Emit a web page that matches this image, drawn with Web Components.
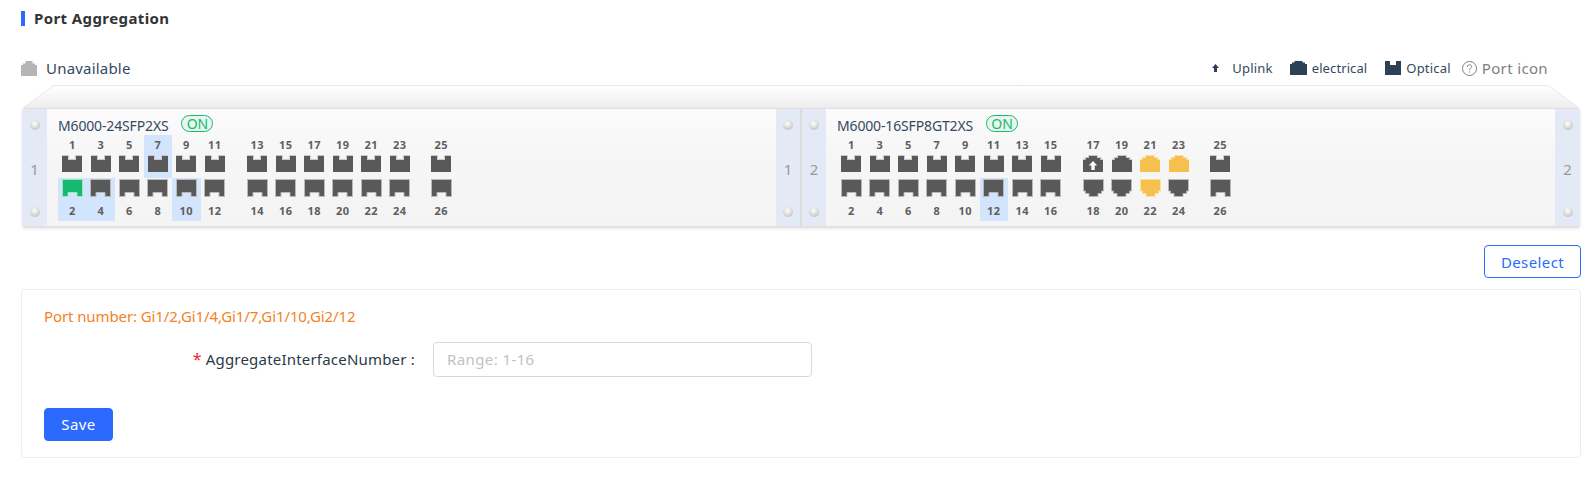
<!DOCTYPE html>
<html lang="en">
<head>
<meta charset="utf-8">
<title>Port Aggregation</title>
<style>
  html, body { margin: 0; background: #fff; }
  body { font-family: "Noto Sans", "Open Sans", sans-serif; color: #34495e; }
</style>
</head>
<body>
<port-aggregation-page></port-aggregation-page>
<script>
const DARK = '#595959';

// top ports are 20x17 with a light line on the upper edge only,
// bottom ports are 21x18 with a full outline
const shapes = {
  sfpTop: { fill: 'M0 1H6V5H14V1H20V17H0Z', edge: 'M0 .5H6.5V4.5H13.5V.5H20' },
  rjTop: { fill: 'M0 17V5H2.5V3H6V1H14V3H17.5V5H20V17Z', edge: 'M0 4.5H2V2.5H5.5V.5H14.5V2.5H18V4.5H20' },
  sfpBottom: { fill: 'M.5 .5H20.5V17.5H15V13.5H6V17.5H.5Z' },
  rjBottom: { fill: 'M.5 .5H20.5V12H18.5V14.5H15V17.5H6V14.5H2.5V12H.5Z' }
};

function portIcon(type, color, edge, uplink) {
  const shape = shapes[type];
  const arrow = uplink ? '<path d="M10 6L14.2 10.5H11.7V15H8.3V10.5H5.8Z" fill="#fff"/>' : '';
  if (shape.edge) {
    return `<svg width="20" height="17" viewBox="0 0 20 17"><path d="${shape.fill}" fill="${color}"/><path d="${shape.edge}" fill="none" stroke="${edge}"/>${arrow}</svg>`;
  }
  return `<svg width="21" height="18" viewBox="0 0 21 18"><path d="${shape.fill}" fill="${color}" stroke="${edge}"/></svg>`;
}

class SectionHeading extends HTMLElement {
  constructor() {
    super();
    this.attachShadow({ mode: 'open' }).innerHTML = `
      <style>
        :host { display: flex; align-items: center; gap: 9px; height: 15px; font-size: 15px; font-weight: 700; color: #333; letter-spacing: .4px; }
        i { width: 4px; height: 15px; background: #2b6afd; }
        span { margin-top: -2px; }
      </style>
      <i></i><span><slot></slot></span>`;
  }
}
customElements.define('section-heading', SectionHeading);

class PortLegend extends HTMLElement {
  constructor() {
    super();
    this.attachShadow({ mode: 'open' }).innerHTML = `
      <style>
        :host { display: flex; align-items: center; height: 20px; color: #34495e; font-size: 13px; letter-spacing: .2px; }
        .status { display: flex; align-items: center; gap: 9px; font-size: 15px; margin-right: auto; }
        .item { display: flex; align-items: center; }
        svg { display: block; }
        .uplink { margin-right: 13px; }
        .uplink-text { margin-right: 17px; }
        .elec-text { margin-left: 5px; margin-right: 18px; letter-spacing: .1px; }
        .opt-text { margin-left: 5px; margin-right: 11px; }
        .help { display: flex; align-items: center; gap: 5px; color: #808080; font-size: 15px; letter-spacing: .35px; margin-right: 33px; }
      </style>
      <div class="status">
        <svg width="16" height="15" viewBox="0 0 16 15"><path d="M0 15V4H2V2.5H4.5V0H11.5V2.5H14V4H16V15Z" fill="#b5b5b5"/></svg>
        <span>Unavailable</span>
      </div>
      <div class="item">
        <svg class="uplink" width="7" height="8" viewBox="0 0 7 8"><path d="M3.5 0L7 4H5V8H2V4H0Z" fill="#2c4058"/></svg>
        <span class="uplink-text">Uplink</span>
      </div>
      <div class="item">
        <svg width="17" height="14" viewBox="0 0 17 14"><path d="M0 14V3H2V1.5H4.5V0H12.5V1.5H15V3H17V14Z" fill="#2c4058"/></svg>
        <span class="elec-text">electrical</span>
      </div>
      <div class="item">
        <svg width="16" height="14" viewBox="0 0 16 14"><path d="M0 0H5V4H11V0H16V14H0Z" fill="#2c4058"/></svg>
        <span class="opt-text">Optical</span>
      </div>
      <div class="help">
        <svg width="15" height="15" viewBox="0 0 15 15" fill="none" stroke="#808080"><circle cx="7.5" cy="7.5" r="7"/><path d="M5.4 5.8C5.4 3 9.7 3 9.7 5.7C9.7 7.3 7.5 7.3 7.5 9.1"/><path d="M7.5 10.4V11.6"/></svg>
        <span>Port icon</span>
      </div>`;
  }
}
customElements.define('port-legend', PortLegend);

class SwitchPort extends HTMLElement {
  constructor() {
    super();
    this.attachShadow({ mode: 'open' });
  }
  connectedCallback() {
    const n = Number(this.getAttribute('n'));
    const top = n % 2 === 1;
    const rj = this.hasAttribute('rj');
    const state = this.getAttribute('state');
    const type = (rj ? 'rj' : 'sfp') + (top ? 'Top' : 'Bottom');
    let color = DARK;
    let edge = top ? '#c9c9c9' : '#b9b9b9';
    if (state === 'up') { color = '#14bb6e'; edge = '#a3e2c4'; }
    if (state === 'warn') { color = '#f5c04e'; edge = '#f9dfa6'; }
    this.shadowRoot.innerHTML = `
      <style>
        :host { display: flex; flex-direction: column; align-items: center; height: 43px; box-sizing: border-box;
                font-size: 11px; font-weight: 700; color: #5f5f5f; letter-spacing: .4px; }
        :host([selected]) { background: #d3e4fd; }
        svg { display: block; }
        span { display: block; text-align: center; }
        .top span { height: 20px; line-height: 20px; }
        .bottom { padding-top: 1px; }
        .bottom span { padding-top: 3px; height: 21px; line-height: 21px; }
      </style>
      <div class="${top ? 'top' : 'bottom'}">
        ${top ? `<span>${n}</span>` : ''}
        ${portIcon(type, color, edge, this.hasAttribute('uplink'))}
        ${top ? '' : `<span>${n}</span>`}
      </div>`;
  }
}
customElements.define('switch-port', SwitchPort);

class SideStrip extends HTMLElement {
  constructor() {
    super();
    this.attachShadow({ mode: 'open' }).innerHTML = `
      <style>
        :host { display: flex; flex-direction: column; align-items: center; justify-content: space-between; box-sizing: border-box;
                width: var(--strip-width, 24px); flex: none; padding: 11px 0 9px; background: #e4e9f6; color: #999; font-size: 15px; }
        b { display: block; width: 10px; height: 10px; border-radius: 50%; background: radial-gradient(circle at 45% 35%, #f8f8f8 10%, #d6d6d6 55%, #adadad 100%); }
      </style>
      <b></b><slot></slot><b></b>`;
  }
}
customElements.define('side-strip', SideStrip);

class SwitchUnit extends HTMLElement {
  constructor() {
    super();
    this.attachShadow({ mode: 'open' });
  }
  connectedCallback() {
    const slotNo = this.getAttribute('slot-no');
    const list = name => (this.getAttribute(name) || '').split(',');
    const selected = list('selected');
    const up = list('up');
    const warn = list('warn');
    const rj = list('rj');
    const uplink = this.getAttribute('uplink');
    const port = n => {
      const s = String(n);
      const attrs = [`n="${n}"`];
      if (selected.includes(s)) attrs.push('selected');
      if (up.includes(s)) attrs.push('state="up"');
      if (warn.includes(s)) attrs.push('state="warn"');
      if (rj.includes(s)) attrs.push('rj');
      if (uplink === s) attrs.push('uplink');
      return `<switch-port ${attrs.join(' ')}></switch-port>`;
    };
    const group = (from, to) => {
      let html = '';
      for (let n = from; n <= to; n++) html += port(n);
      return `<div class="group">${html}</div>`;
    };
    const split = Number(this.getAttribute('split'));
    const outerLeft = this.hasAttribute('first');
    this.shadowRoot.innerHTML = `
      <style>
        :host { display: flex; flex: 1 1 0; min-width: 0; }
        :host([first]) { border-right: 1px solid #dcdcdc; }
        :host(:not([first])) { border-left: 1px solid #dcdcdc; }
        .wide { --strip-width: 25px; }
        .main { flex: 1; min-width: 0; padding-left: 11px; display: flex; flex-direction: column;
                background: linear-gradient(#fdfbfc, #f6f6f6 40%, #f4f4f4); }
        .title { display: flex; align-items: center; box-sizing: border-box; height: 26px; padding-top: 6px; font-size: 14px; color: #34495e; letter-spacing: -.15px; }
        .on { margin: 0 0 3px 13px; width: 32px; height: 17px; box-sizing: border-box; border: 1px solid #18b96e; border-radius: 9px;
              background: #e7f7ef; color: #18b96e; font-size: 14px; line-height: 15px; text-align: center; letter-spacing: 0; }
        .ports { display: flex; }
        .group { display: grid; grid-auto-flow: column; grid-template-rows: 43px 43px; grid-auto-columns: 28.5px; }
        .group + .group { margin-left: 14px; }
        .group:last-child { margin-left: 13px; }
      </style>
      <side-strip class="${outerLeft ? 'wide' : ''}">${slotNo}</side-strip>
      <div class="main">
        <div class="title"><span>${this.getAttribute('model')}</span><span class="on">ON</span></div>
        <div class="ports">${group(1, split)}${group(split + 1, 24)}${group(25, 26)}</div>
      </div>
      <side-strip class="${outerLeft ? '' : 'wide'}">${slotNo}</side-strip>`;
  }
}
customElements.define('switch-unit', SwitchUnit);

class SwitchChassis extends HTMLElement {
  constructor() {
    super();
    this.attachShadow({ mode: 'open' }).innerHTML = `
      <style>
        :host { display: block; margin: 0 1px; }
        svg { display: block; width: 100%; height: 23px; }
        .face { display: flex; height: 120px; box-sizing: border-box; border-top: 1px solid #dfdfdf; border-bottom: 2px solid #e2e2e2;
                border-radius: 3px; box-shadow: 0 1px 3px rgba(0,0,0,.1); overflow: hidden; }
      </style>
      <svg viewBox="0 0 1558 23" aria-hidden="true">
        <defs><linearGradient id="bevel" x1="0" y1="0" x2="0" y2="1"><stop offset="0" stop-color="#fff"/><stop offset="1" stop-color="#eeeded"/></linearGradient></defs>
        <path d="M1 23L31.5 .5H1526.5L1557 23Z" fill="url(#bevel)" stroke="#e8e8e8"/>
      </svg>
      <div class="face"><slot></slot></div>`;
  }
}
customElements.define('switch-chassis', SwitchChassis);

class AppButton extends HTMLElement {
  constructor() {
    super();
    this.attachShadow({ mode: 'open' }).innerHTML = `
      <style>
        :host { display: inline-flex; align-items: center; justify-content: center; box-sizing: border-box; height: 33px;
                border: 1px solid #2b6afd; border-radius: 4px; font-size: 15px; letter-spacing: .4px; color: #2b6afd; background: #fff; }
        :host([primary]) { background: #2b6afd; color: #fff; padding-bottom: 2px; }
      </style>
      <slot></slot>`;
  }
}
customElements.define('app-button', AppButton);

class FormRow extends HTMLElement {
  constructor() {
    super();
    this.attachShadow({ mode: 'open' }).innerHTML = `
      <style>
        :host { display: flex; align-items: center; height: 35px; font-size: 15px; letter-spacing: .2px; color: #2b3a4a; }
        label { width: 371px; margin-right: 18px; padding-bottom: 2px; text-align: right; white-space: nowrap; }
        em { color: #f5222d; font-style: normal; font-size: 16px; line-height: 1; margin-right: 4px; }
        input { width: 379px; height: 35px; box-sizing: border-box; border: 1px solid #d9d9d9; border-radius: 4px; padding: 0 13px 2px;
                font: inherit; letter-spacing: .4px; outline: none; }
        input::placeholder { color: #c2c2c2; opacity: 1; }
      </style>
      <label><em>*</em><slot></slot> :</label>
      <input>`;
    this.shadowRoot.querySelector('input').placeholder = this.getAttribute('placeholder');
  }
}
customElements.define('form-row', FormRow);

class PortAggregationPage extends HTMLElement {
  constructor() {
    super();
    this.attachShadow({ mode: 'open' }).innerHTML = `
      <style>
        :host { display: block; box-sizing: border-box; width: 1585px; height: 484px; padding: 11px 4px 0 21px; overflow: hidden; }
        port-legend { margin-top: 32px; margin-bottom: 7px; }
        .actions { display: flex; justify-content: flex-end; margin: 17px 0 11px; }
        .actions app-button { width: 97px; }
        .card { border: 1px solid #eee; border-radius: 4px; height: 169px; box-sizing: border-box; padding: 16px 22px 0; }
        .ports { height: 20px; line-height: 20px; font-size: 15px; letter-spacing: -.1px; color: #f5821f; margin-bottom: 16px; }
        .save { margin-top: 31px; width: 69px; }
      </style>
      <section-heading>Port Aggregation</section-heading>
      <port-legend></port-legend>
      <switch-chassis>
        <switch-unit first slot-no="1" split="12" model="M6000-24SFP2XS" selected="2,4,7,10" up="2"></switch-unit>
        <switch-unit slot-no="2" split="16" model="M6000-16SFP8GT2XS" selected="12" rj="17,18,19,20,21,22,23,24" warn="21,22,23" uplink="17"></switch-unit>
      </switch-chassis>
      <div class="actions"><app-button>Deselect</app-button></div>
      <div class="card">
        <div class="ports">Port number: Gi1/2,Gi1/4,Gi1/7,Gi1/10,Gi2/12</div>
        <form-row placeholder="Range: 1-16">AggregateInterfaceNumber</form-row>
        <app-button primary class="save">Save</app-button>
      </div>`;
  }
}
customElements.define('port-aggregation-page', PortAggregationPage);
</script>
</body>
</html>
